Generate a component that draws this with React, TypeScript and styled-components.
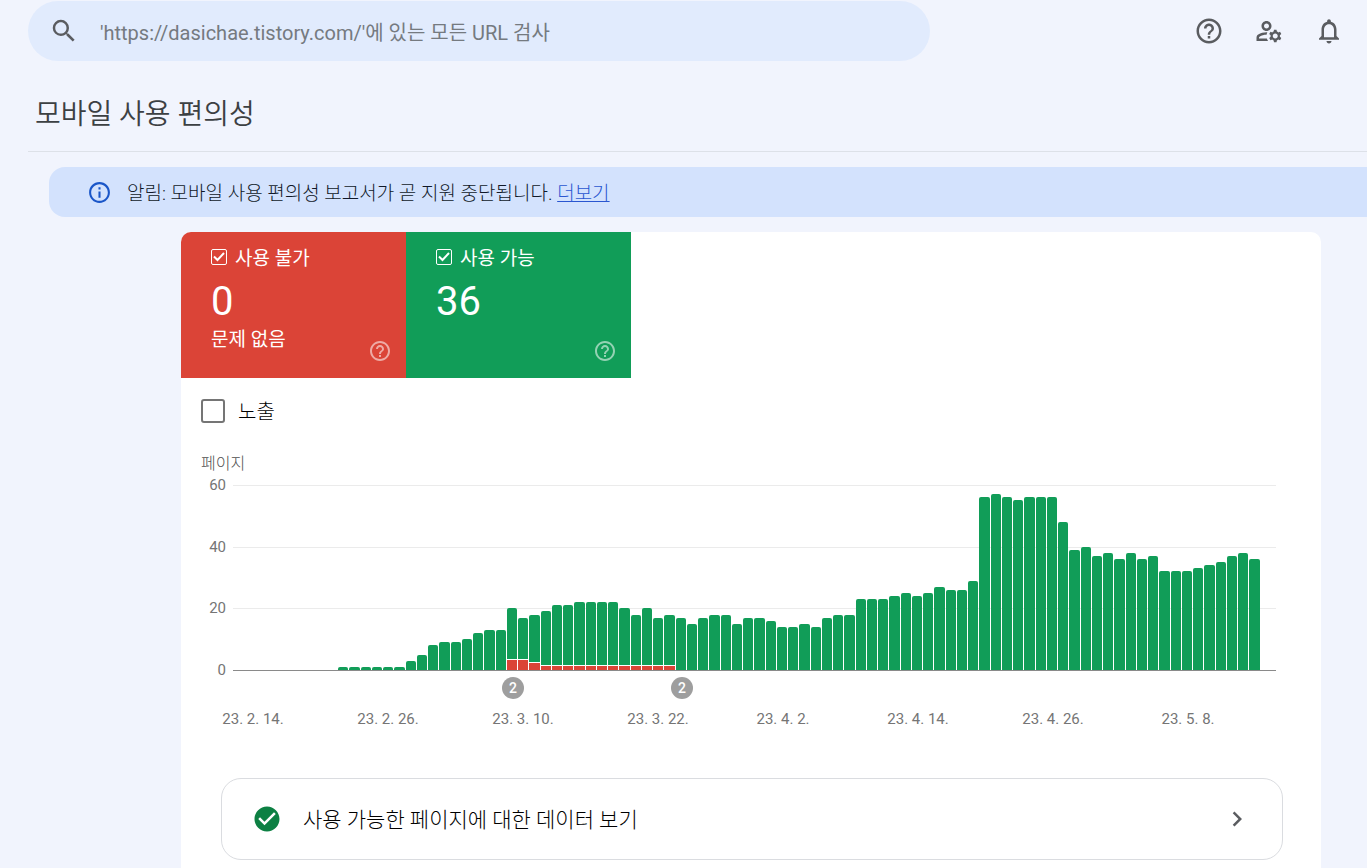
import React from "react";
import styled, { createGlobalStyle } from "styled-components";
import {
  MdCheckCircle,
  MdChevronRight,
  MdHelpOutline,
  MdInfoOutline,
  MdNotificationsNone,
  MdOutlineManageAccounts,
  MdSearch,
} from "react-icons/md";

const GlobalStyle = createGlobalStyle`
  *, *::before, *::after { box-sizing: border-box; }
  body {
    margin: 0;
    background: #f1f4fd;
    color: #202124;
    font-family: Roboto, "Noto Sans CJK KR", sans-serif;
    font-weight: 400;
  }
  h1, p { margin: 0; }
  button { font: inherit; color: inherit; cursor: pointer; }
`;

const Page = styled.div`
  display: flex;
  flex-direction: column;
  min-height: 100vh;
`;

const Header = styled.header`
  display: flex;
  align-items: center;
  justify-content: space-between;
  gap: 24px;
  padding: 1px 16px 0 28px;
`;

const SearchBox = styled.label`
  display: flex;
  align-items: center;
  gap: 21px;
  flex: 0 1 902px;
  height: 60px;
  padding: 0 21px;
  border-radius: 30px;
  background: #e1ebfd;
  color: #5a5c60;

  svg { flex: none; }
`;

const SearchInput = styled.input`
  flex: 1;
  min-width: 0;
  padding: 4px 0 0;
  border: 0;
  outline: 0;
  background: transparent;
  color: #202124;
  font: inherit;
  font-size: 20px;
  font-weight: 400;
  line-height: 28px;

  &::placeholder { color: #757a80; opacity: 1; }
`;

const HeaderActions = styled.div`
  display: flex;
  gap: 16px;
`;

const IconButton = styled.button`
  display: grid;
  place-items: center;
  width: 44px;
  height: 44px;
  padding: 0;
  border: 0;
  border-radius: 50%;
  background: transparent;
  color: #5a5c60;
`;

const TitleBar = styled.div`
  margin-left: 28px;
  padding: 34px 7px 16px;
  border-bottom: 1px solid #dde1e8;
`;

const Title = styled.h1`
  color: #3c4043;
  font-size: 28px;
  font-weight: 350;
  line-height: 40px;
`;

const Notice = styled.div`
  display: flex;
  align-items: center;
  gap: 15px;
  min-height: 50px;
  margin: 15px 0 15px 49px;
  padding: 0 38px;
  border-radius: 16px 0 0 16px;
  background: #d3e2fd;
  color: #101828;
  font-size: 19px;
  font-weight: 300;
  line-height: 28px;

  svg { flex: none; color: #1a56c8; }
  p { padding-top: 4px; }
`;

const NoticeLink = styled.a`
  color: #2a56d0;
  text-decoration: underline;
`;

const Card = styled.main`
  flex: 1;
  margin: 0 46px 0 181px;
  padding-bottom: 8px;
  overflow: hidden;
  border-radius: 10px 10px 0 0;
  background: #fff;
`;

const Tiles = styled.div`
  display: flex;
`;

const Tile = styled.section<{ $color: string }>`
  display: flex;
  align-items: flex-end;
  justify-content: space-between;
  width: 225px;
  height: 146px;
  padding: 0 14px 15px 30px;
  background: ${(p) => p.$color};
  color: #fff;
`;

const TileBody = styled.div`
  align-self: flex-start;
  padding-top: 13px;
`;

const TileLabel = styled.label`
  display: flex;
  align-items: center;
  gap: 8px;
  font-size: 19px;
  line-height: 28px;
`;

const TickBox = styled.span`
  display: grid;
  width: 16px;
  height: 16px;
  margin-bottom: 4px;

  > * { grid-area: 1 / 1; }
  svg { pointer-events: none; display: none; }
  input:checked + svg { display: block; }
`;

const TileCheckbox = styled.input`
  appearance: none;
  width: 16px;
  height: 16px;
  margin: 0;
  border: 1px solid #fff;
  border-radius: 2px;
`;

const TileValue = styled.p`
  font-size: 40px;
  line-height: 58px;
`;

const TileNote = styled.p`
  font-size: 19px;
  line-height: 18px;
`;

const TileHelp = styled.button`
  display: grid;
  padding: 0;
  border: 0;
  background: transparent;
  opacity: 0.55;
`;

const ImpressionsLabel = styled.label`
  display: flex;
  align-items: center;
  gap: 13px;
  width: fit-content;
  margin: 17px 20px 0;
  color: #000;
  font-size: 20px;
  font-weight: 300;
  line-height: 28px;

  span { padding-top: 3px; }
`;

const ImpressionsCheckbox = styled.input`
  appearance: none;
  width: 24px;
  height: 24px;
  margin: 0;
  border: 2px solid #757575;
  border-radius: 3px;

  &:checked { background: #757575; }
`;

const AxisTitle = styled.p`
  margin: 28px 20px 0;
  color: #505050;
  font-size: 16px;
  font-weight: 300;
  line-height: 20px;
`;

const Chart = styled.svg`
  display: block;
  width: 100%;
  height: auto;

  text {
    fill: #757575;
    font-size: 15px;
  }
  .count {
    fill: #fff;
    font-size: 14px;
    font-weight: 500;
  }
`;

const DataLink = styled.a`
  display: flex;
  align-items: center;
  gap: 21px;
  min-height: 82px;
  margin: 44px 38px 0 40px;
  padding: 0 30px;
  border: 1px solid #dadce0;
  border-radius: 20px;
  color: #000;
  text-decoration: none;
  font-size: 21px;
  font-weight: 300;
  line-height: 28px;

  span { flex: 1; padding-top: 2px; }
  svg { flex: none; color: #5a5c60; }
  svg:first-child { color: #0d8043; }
`;

const totals = [
  1, 1, 1, 1, 1, 1, 3, 5, 8, 9, 9, 10, 12, 13, 13, 20, 17, 18, 19, 21, 21, 22,
  22, 22, 22, 20, 18, 20, 17, 18, 17, 15, 17, 18, 18, 15, 17, 17, 16, 14, 14,
  15, 14, 17, 18, 18, 23, 23, 23, 24, 25, 24, 25, 27, 26, 26, 29, 56, 57, 56,
  55, 56, 56, 56, 48, 39, 40, 37, 38, 36, 38, 36, 37, 32, 32, 32, 33, 34, 35,
  37, 38, 36,
];

const FIRST_ERROR = 15;
const errors = [3, 3, 2, 1, 1, 1, 1, 1, 1, 1, 1, 1, 1, 1, 1];

const BASE = 196;
const PITCH = 45 / 4;
const yOf = (value: number) => Math.round(BASE - (value * 185) / 60);
const xOf = (index: number) => Math.round(157 + index * PITCH);

const dates = [
  { x: 72, text: "23. 2. 14." },
  { x: 207, text: "23. 2. 26." },
  { x: 342, text: "23. 3. 10." },
  { x: 477, text: "23. 3. 22." },
  { x: 602, text: "23. 4. 2." },
  { x: 737, text: "23. 4. 14." },
  { x: 872, text: "23. 4. 26." },
  { x: 1007, text: "23. 5. 8." },
];

const markers = [332, 501];

function PagesChart() {
  return (
    <Chart viewBox="0 0 1140 260" role="img" aria-label="페이지">
      {[60, 40, 20, 0].map((value) => (
        <g key={value}>
          {value > 0 && (
            <rect x={52} y={yOf(value)} width={1043} height={1} fill="#ebebeb" />
          )}
          <text x={45} y={yOf(value) + 5} textAnchor="end">
            {value}
          </text>
        </g>
      ))}
      <rect x={52} y={BASE} width={1043} height={1} fill="#8a8a8a" />
      {totals.map((total, i) => {
        const x = xOf(i);
        const top = yOf(total);
        const w = xOf(i + 1) - x - 1;
        const error = errors[i - FIRST_ERROR] ?? 0;
        const errorTop = yOf(error);
        return (
          <g key={i}>
            <path
              d={`M${x} ${BASE}V${top + 2}q0-2 2-2h${w - 4}q2 0 2 2V${BASE}z`}
              fill="#119d58"
            />
            {error > 0 && (
              <>
                <rect x={x} y={errorTop - 2} width={w} height={1} fill="#fff" />
                <rect x={x} y={errorTop - 1} width={w} height={BASE - errorTop + 1} fill="#db4437" />
              </>
            )}
          </g>
        );
      })}
      {markers.map((x) => (
        <g key={x}>
          <circle cx={x} cy={214} r={11} fill="#9e9e9e" />
          <text className="count" x={x} y={219} textAnchor="middle">
            2
          </text>
        </g>
      ))}
      {dates.map((date) => (
        <text key={date.text} x={date.x} y={250} textAnchor="middle">
          {date.text}
        </text>
      ))}
    </Chart>
  );
}

interface StatusTileProps {
  color: string;
  label: string;
  value: number;
  note?: string;
}

function StatusTile({ color, label, value, note }: StatusTileProps) {
  return (
    <Tile $color={color}>
      <TileBody>
        <TileLabel>
          <TickBox>
            <TileCheckbox type="checkbox" defaultChecked />
            <svg width="16" height="16" viewBox="0 0 16 16" aria-hidden="true">
              <path d="M3 7.500l3.500 3.500 6.500-7" fill="none" stroke="#fff" strokeWidth="2" />
            </svg>
          </TickBox>
          {label}
        </TileLabel>
        <TileValue>{value}</TileValue>
        {note && <TileNote>{note}</TileNote>}
      </TileBody>
      <TileHelp type="button" aria-label={`${label} 도움말`}>
        <MdHelpOutline size={24} />
      </TileHelp>
    </Tile>
  );
}

export default function App() {
  return (
    <Page>
      <GlobalStyle />
      <Header>
        <SearchBox>
          <MdSearch size={30} />
          <SearchInput
            type="text"
            aria-label="URL 검사"
            placeholder="'https://dasichae.tistory.com/'에 있는 모든 URL 검사"
          />
        </SearchBox>
        <HeaderActions>
          <IconButton type="button" aria-label="도움말">
            <MdHelpOutline size={30} />
          </IconButton>
          <IconButton type="button" aria-label="사용자 설정">
            <MdOutlineManageAccounts size={30} />
          </IconButton>
          <IconButton type="button" aria-label="알림">
            <MdNotificationsNone size={30} />
          </IconButton>
        </HeaderActions>
      </Header>
      <TitleBar>
        <Title>모바일 사용 편의성</Title>
      </TitleBar>
      <Notice>
        <MdInfoOutline size={25} />
        <p>
          알림: 모바일 사용 편의성 보고서가 곧 지원 중단됩니다.{" "}
          <NoticeLink href="#more">더보기</NoticeLink>
        </p>
      </Notice>
      <Card>
        <Tiles>
          <StatusTile color="#db4437" label="사용 불가" value={0} note="문제 없음" />
          <StatusTile color="#119d58" label="사용 가능" value={36} />
        </Tiles>
        <ImpressionsLabel>
          <ImpressionsCheckbox type="checkbox" />
          <span>노출</span>
        </ImpressionsLabel>
        <AxisTitle>페이지</AxisTitle>
        <PagesChart />
        <DataLink href="#valid-pages">
          <MdCheckCircle size={30} />
          <span>사용 가능한 페이지에 대한 데이터 보기</span>
          <MdChevronRight size={30} />
        </DataLink>
      </Card>
    </Page>
  );
}
